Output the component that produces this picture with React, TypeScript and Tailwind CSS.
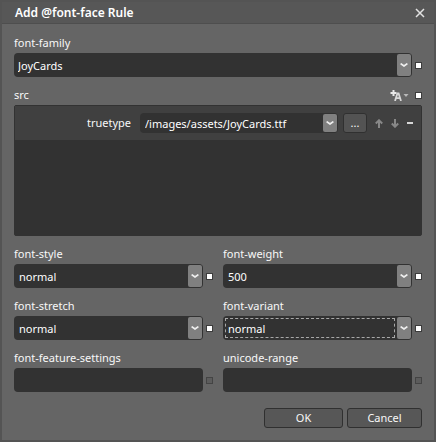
import { useId } from "react";

function Marker({ label, active = true }: { label: string; active?: boolean }) {
  return (
    <button
      type="button"
      aria-label={label}
      className={`size-[7px] shrink-0 border ${active ? "border-[#3c3c3c] bg-white" : "border-[#444444] bg-[#5c5c5c]"}`}
    />
  );
}

type ComboProps = {
  id: string;
  value: string;
  compact?: boolean;
  inset?: boolean;
  focused?: boolean;
};

function Combo({ id, value, compact, inset, focused }: ComboProps) {
  return (
    <div className={`relative min-w-0 flex-1 rounded-[4px] bg-[#323232] ${compact ? "h-5" : "h-6"}`}>
      <select
        id={id}
        defaultValue={value}
        className={`block h-full w-full appearance-none bg-transparent pt-px pr-6 leading-4 text-white outline-none ${inset ? "pl-[5px]" : "pl-1"}`}
      >
        <option>{value}</option>
      </select>
      {focused && (
        <span className="pointer-events-none absolute inset-y-[2px] right-[17px] left-[2px] border border-dashed border-[#a8a8a8]" />
      )}
      <span className="pointer-events-none absolute inset-y-px right-px flex w-[14px] items-center justify-center rounded-[2px] bg-[#808080]">
        <svg width="8" height="4" viewBox="0 0 8 4" fill="none" stroke="#eeeeee" strokeWidth="1.7">
          <path d="M0.6 0.6 4 3 7.4 0.6" />
        </svg>
      </span>
    </div>
  );
}

function SelectField({ label, value, inset = true, focused }: { label: string; value: string; inset?: boolean; focused?: boolean }) {
  const id = useId();
  return (
    <div className="min-w-0 flex-1">
      <label htmlFor={id} className="block leading-5">
        {label}
      </label>
      <div className="flex items-center gap-[3px]">
        <Combo id={id} value={value} inset={inset} focused={focused} />
        <Marker label={`${label} options`} />
      </div>
    </div>
  );
}

function TextField({ label }: { label: string }) {
  const id = useId();
  return (
    <div className="min-w-0 flex-1">
      <label htmlFor={id} className="block leading-5">
        {label}
      </label>
      <div className="flex items-center gap-[3px]">
        <input id={id} type="text" className="h-6 min-w-0 flex-1 rounded-[4px] bg-[#323232] px-[5px] outline-none" />
        <Marker label={`${label} options`} active={false} />
      </div>
    </div>
  );
}

export default function App() {
  return (
    <div className="min-h-screen border-2 border-[#545454] bg-[#656565] font-['Noto_Sans','Open_Sans',sans-serif] text-[11px] text-[#f8f8f8]">
      <header className="flex h-[22px] items-center justify-between border-b border-[#4e4e4e] bg-[#575757] pr-2 pl-[13px]">
        <h1 className="text-xs font-semibold text-white">Add @font-face Rule</h1>
        <button type="button" aria-label="Close" className="flex size-3 items-center justify-center">
          <svg width="10" height="10" viewBox="0 0 10 10" stroke="#e2e2e2" strokeWidth="1.5">
            <path d="M1 1 9 9M9 1 1 9" />
          </svg>
        </button>
      </header>

      <form className="flex flex-col gap-2 px-3 pt-[9px] pb-3">
        <SelectField label="font-family" value="JoyCards" inset={false} />

        <section>
          <div className="flex h-5 items-center justify-between">
            <h2>src</h2>
            <div className="flex items-center gap-[6px]">
              <button type="button" aria-label="Add source" className="flex">
                <svg width="19" height="12" viewBox="0 0 19 12" fill="none">
                  <path d="M0.5 4H6.5M3.5 1V7" stroke="#e8e8e8" strokeWidth="2" />
                  <path d="M5 12 7.4 4.5H8.6L11 12M6 9.2H10" stroke="#d8d8d8" strokeWidth="1.8" />
                  <path d="M13.5 5H18.5L16 8Z" fill="#b8b8b8" />
                </svg>
              </button>
              <Marker label="src options" />
            </div>
          </div>
          <div className="h-[131px] rounded-[2px] border border-[#323232] bg-[#323232]">
            <div className="flex h-[34px] items-center gap-[5px] bg-[#404040] pr-2">
              <label htmlFor="source" className="w-[120px] pr-1 text-right">
                truetype
              </label>
              <Combo id="source" value="/images/assets/JoyCards.ttf" compact inset />
              <button
                type="button"
                aria-label="Browse"
                className="h-5 w-6 rounded-[3px] border border-[#303030] bg-[#535353] leading-4"
              >
                ...
              </button>
              <div className="flex items-center gap-2 pl-[3px]">
                <button type="button" aria-label="Move up">
                  <svg width="8" height="9" viewBox="0 0 8 9" fill="none" stroke="#888888" strokeWidth="2">
                    <path d="M4 9V1M0.8 4.5 4 1.3 7.2 4.5" />
                  </svg>
                </button>
                <button type="button" aria-label="Move down">
                  <svg width="8" height="9" viewBox="0 0 8 9" fill="none" stroke="#888888" strokeWidth="2">
                    <path d="M4 0V8M0.8 4.5 4 7.7 7.2 4.5" />
                  </svg>
                </button>
                <button type="button" aria-label="Remove">
                  <svg width="6" height="2" viewBox="0 0 6 2">
                    <path d="M0 0H6V2H0Z" fill="#d6d6d6" />
                  </svg>
                </button>
              </div>
            </div>
          </div>
        </section>

        <div className="flex gap-[10px]">
          <SelectField label="font-style" value="normal" />
          <SelectField label="font-weight" value="500" />
        </div>
        <div className="flex gap-[10px]">
          <SelectField label="font-stretch" value="normal" />
          <SelectField label="font-variant" value="normal" focused />
        </div>
        <div className="flex gap-[10px]">
          <TextField label="font-feature-settings" />
          <TextField label="unicode-range" />
        </div>

        <footer className="mt-2 flex justify-end gap-1">
          <button type="button" className="h-5 w-[79px] rounded-[3px] border border-[#303030] bg-[#575757] leading-4">
            OK
          </button>
          <button type="button" className="h-5 w-[75px] rounded-[3px] border border-[#303030] bg-[#575757] leading-4">
            Cancel
          </button>
        </footer>
      </form>
    </div>
  );
}
